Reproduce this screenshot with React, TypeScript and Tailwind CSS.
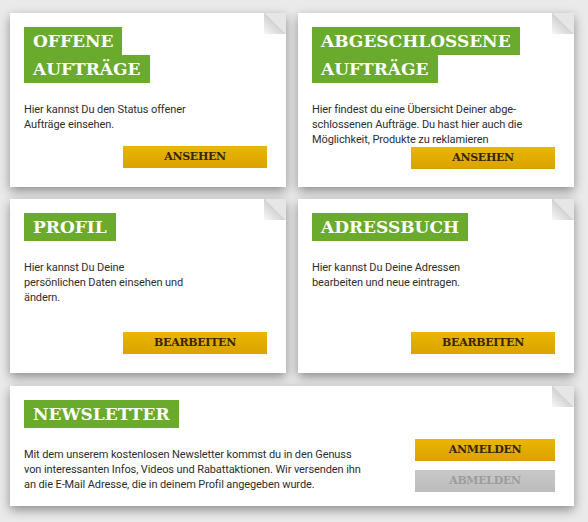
import type { ReactNode } from 'react';

const sans = { fontFamily: 'Roboto, "Liberation Sans", sans-serif' };
const serif = { fontFamily: '"DejaVu Serif", "Liberation Serif", serif' };

function Label({ lines }: { lines: string[] }) {
  return (
    <div className="flex flex-col items-start" style={serif}>
      {lines.map((l) => (
        <span key={l} className="bg-[#6aaa2c] px-[9px] h-[28px] leading-[29px] text-[17px] font-bold text-white">
          {l}
        </span>
      ))}
    </div>
  );
}

function Btn({ children, off }: { children: ReactNode; off?: boolean }) {
  return (
    <button
      style={serif}
      className={`h-[22px] text-[11px] font-bold tracking-[-0.3px] ${
        off
          ? 'bg-[linear-gradient(#c8c8c8,#bcbcbc)] text-[#9c9c9c]'
          : 'bg-[linear-gradient(#ebb600,#d9a200)] text-[#35260a]'
      }`}
    >
      {children}
    </button>
  );
}

function Card({ className = '', children }: { className?: string; children: ReactNode }) {
  return (
    <div className={`relative bg-white shadow-[0_4px_10px_rgba(0,0,0,0.4)] ${className}`}>
      <div className="absolute top-0 right-0 w-[22px] h-[21px] bg-[linear-gradient(to_bottom_left,#e6e6e6_50%,#d2d2d2_50%,#f8f8f8)]" />
      {children}
    </div>
  );
}

function Tile({ title, text, action }: { title: string[]; text: string[]; action: string }) {
  return (
    <Card className="h-[174px] flex flex-col pt-[14px] pl-[14px] pr-[19px] pb-[19px]">
      <Label lines={title} />
      <p className="mt-[19px] text-[11px] leading-[15px] tracking-[-0.1px] text-[#2e2e2e]" style={sans}>
        {text.map((t) => (
          <span key={t} className="block">{t}</span>
        ))}
      </p>
      <div className="mt-auto flex justify-end">
        <div className="w-[144px] flex flex-col">
          <Btn>{action}</Btn>
        </div>
      </div>
    </Card>
  );
}

export default function App() {
  return (
    <div className="w-[588px] h-[522px] bg-[#eaeaea] pt-[13px] pl-[10px] pr-[14px]">
      <div className="grid grid-cols-2 gap-x-[12px] gap-y-[12px]">
        <Tile
          title={['OFFENE', 'AUFTRÄGE']}
          text={['Hier kannst Du den Status offener', 'Aufträge einsehen.']}
          action="ANSEHEN"
        />
        <Tile
          title={['ABGESCHLOSSENE', 'AUFTRÄGE']}
          text={[
            'Hier findest du eine Übersicht Deiner abge-',
            'schlossenen Aufträge. Du hast hier auch die',
            'Möglichkeit, Produkte zu reklamieren',
          ]}
          action="ANSEHEN"
        />
        <Tile
          title={['PROFIL']}
          text={['Hier kannst Du Deine', 'persönlichen Daten einsehen und', 'ändern.']}
          action="BEARBEITEN"
        />
        <Tile
          title={['ADRESSBUCH']}
          text={['Hier kannst Du Deine Adressen', 'bearbeiten und neue eintragen.']}
          action="BEARBEITEN"
        />
      </div>
      <Card className="mt-[13px] h-[120px] flex pt-[14px] pl-[14px] pr-[19px] pb-[14px]">
        <div className="flex-1 flex flex-col">
          <Label lines={['NEWSLETTER']} />
          <p className="mt-[19px] text-[11px] leading-[15px] tracking-[-0.1px] text-[#2e2e2e]" style={sans}>
            <span className="block">Mit dem unserem kostenlosen Newsletter kommst du in den Genuss</span>
            <span className="block">von interessanten Infos, Videos und Rabattaktionen. Wir versenden ihn</span>
            <span className="block">an die E-Mail Adresse, die in deinem Profil angegeben wurde.</span>
          </p>
        </div>
        <div className="w-[140px] flex flex-col justify-end gap-[9px]">
          <Btn>ANMELDEN</Btn>
          <Btn off>ABMELDEN</Btn>
        </div>
      </Card>
    </div>
  );
}
